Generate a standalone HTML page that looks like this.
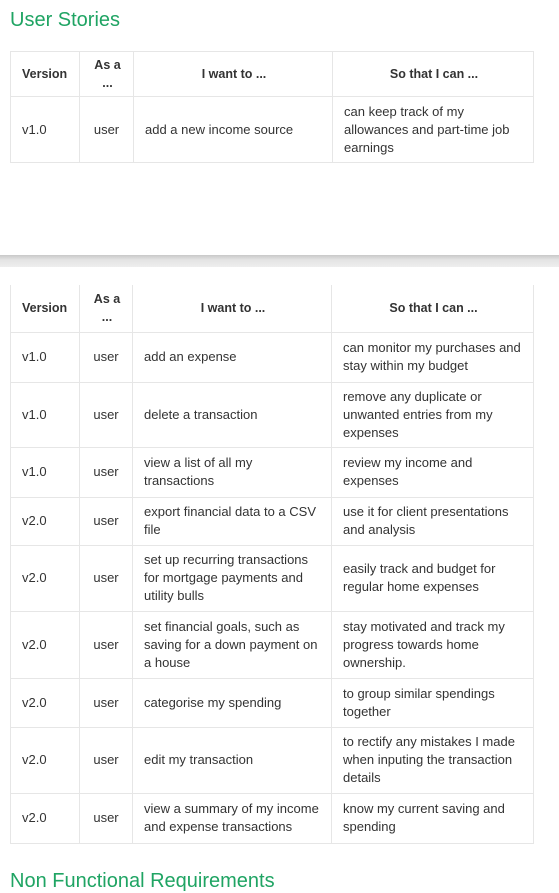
<!DOCTYPE html>
<html><head><style>
body{margin:0;background:#fff;font-family:"Liberation Sans",sans-serif;color:#333;width:559px;height:874px;overflow:hidden;position:relative}
h2{position:absolute;left:10px;top:9px;margin:0;font-weight:normal;font-size:20px;color:#1fa463}
table{position:absolute;left:10px;border-collapse:collapse;font-size:13px;line-height:18px;width:523px;table-layout:fixed}
td,th{border:1px solid #e6e6e6;padding:0 9px 0 11px;vertical-align:middle}
th{font-weight:bold;text-align:center;font-size:12.5px}
th:first-child,td:first-child{text-align:left}
td:nth-child(2){text-align:center;padding:0 4px}
.sep{position:absolute;left:0;top:255px;width:559px;height:12px;background:linear-gradient(#c8c8c8,#e4e4e4 40%,#eee)}
.t2{border-top:none}
.t2 tr:first-child th{border-top:none}
.h3{position:absolute;left:10px;top:869px;font-size:20px;color:#1fa463;line-height:24px}
</style></head><body>
<h2>User Stories</h2>
<table style="top:51px">
<colgroup><col style="width:69px"><col style="width:54px"><col style="width:199px"><col style="width:201px"></colgroup>
<tr style="height:45px"><th>Version</th><th>As a<br>...</th><th>I want to ...</th><th>So that I can ...</th></tr>
<tr style="height:66px"><td>v1.0</td><td>user</td><td>add a new income source</td><td>can keep track of my allowances and part-time job earnings</td></tr>
</table>
<div class="sep"></div>
<table class="t2" style="top:285px">
<colgroup><col style="width:69px"><col style="width:53px"><col style="width:199px"><col style="width:202px"></colgroup>
<tr style="height:47px"><th>Version</th><th>As a<br>...</th><th>I want to ...</th><th>So that I can ...</th></tr>
<tr style="height:50px"><td>v1.0</td><td>user</td><td>add an expense</td><td>can monitor my purchases and stay within my budget</td></tr>
<tr style="height:65px"><td>v1.0</td><td>user</td><td>delete a transaction</td><td>remove any duplicate or unwanted entries from my expenses</td></tr>
<tr style="height:50px"><td>v1.0</td><td>user</td><td>view a list of all my<br>transactions</td><td>review my income and expenses</td></tr>
<tr style="height:48px"><td>v2.0</td><td>user</td><td>export financial data to a CSV file</td><td>use it for client presentations and analysis</td></tr>
<tr style="height:66px"><td>v2.0</td><td>user</td><td>set up recurring transactions for mortgage payments and utility bulls</td><td>easily track and budget for regular home expenses</td></tr>
<tr style="height:67px"><td>v2.0</td><td>user</td><td>set financial goals, such as saving for a down payment on a house</td><td>stay motivated and track my progress towards home ownership.</td></tr>
<tr style="height:49px"><td>v2.0</td><td>user</td><td>categorise my spending</td><td>to group similar spendings together</td></tr>
<tr style="height:66px"><td>v2.0</td><td>user</td><td>edit my transaction</td><td>to rectify any mistakes I made when inputing the transaction details</td></tr>
<tr style="height:50px"><td>v2.0</td><td>user</td><td>view a summary of my income and expense transactions</td><td>know my current saving and spending</td></tr>
</table>
<div class="h3">Non Functional Requirements</div>
</body></html>
